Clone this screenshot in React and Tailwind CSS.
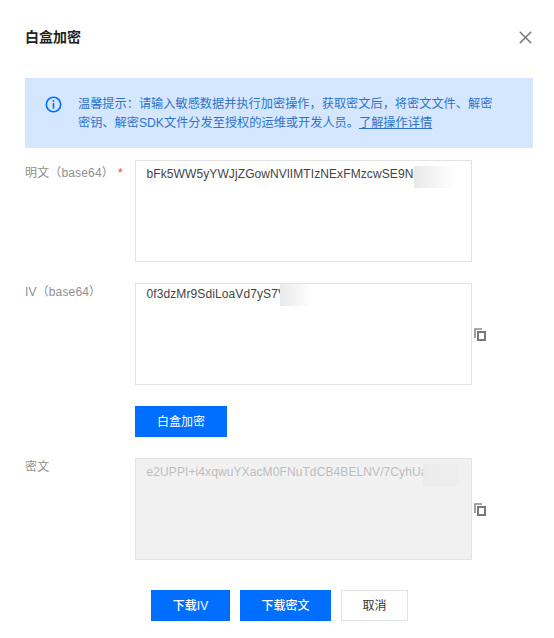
import React from 'react';
import { X } from 'lucide-react';

const tipLine1 = '温馨提示\uFF1A请输入敏感数据并执行加密操作\uFF0C获取密文后\uFF0C将密文文件\u3001解密';
const tipLine2 = '密钥\u3001解密SDK文件分发至授权的运维或开发人员\u3002';

const CopyIcon = () => (
  <svg width="12" height="13" viewBox="0 0 12 13" className="shrink-0" fill="none">
    <path d="M1 10V1h7" stroke="#8a8a8a" strokeWidth="1.6" />
    <rect x="4" y="4" width="7" height="8" stroke="#777777" strokeWidth="2" />
  </svg>
);

const Smudge = ({ className }) => (
  <span className={`absolute h-[22px] bg-gradient-to-r ${className}`} />
);

const Field = ({ label, required, value, disabled, copy, smudge, labelClass = 'pt-[4px]', valueClass = 'mt-[2px]', className = '' }) => (
  <div className={`flex items-start ${className}`}>
    <div className={`w-[110px] shrink-0 text-[12px] leading-[18px] tracking-[0.15px] text-[#8f8f8f] ${labelClass}`}>
      {label}
      {required && <span className="ml-[4px] text-[#e54545]">*</span>}
    </div>
    <div
      className={`relative h-[102px] w-[337px] shrink-0 border-[1.5px] border-[#e3e3e3] px-[10.5px] py-[1px] text-[12px] leading-[20px] tracking-[0.1px] ${
        disabled ? 'bg-[#f1f1f1] text-[#bdbdbd]' : 'bg-white text-[#444444]'
      }`}
    >
      <div className={valueClass}>{value}</div>
      {smudge}
    </div>
    {copy && (
      <div className="ml-[2px] flex h-[102px] items-center pt-[1px]">
        <CopyIcon />
      </div>
    )}
  </div>
);

export default function App() {
  return (
    <div
      className="h-[638px] w-[554px] overflow-hidden bg-white pl-[25px] pr-[21px] text-[12px]"
      style={{ fontFamily: '"Liberation Sans", "Noto Sans CJK SC", sans-serif' }}
    >
      <div className="flex h-[78px] items-start justify-between pt-[28px]">
        <h2 className="text-[14px] font-bold leading-[18px] text-[#222222]">白盒加密</h2>
        <X size={21} strokeWidth={1.8} className="-mr-[3px] -mt-[1px] text-[#7a7a7a]" />
      </div>

      <div className="flex h-[70px] w-[508px] items-start bg-[#d5e7ff] pl-[20px] pt-[17px]">
        <svg width="17" height="17" viewBox="0 0 17 17" className="mt-[1px] shrink-0" fill="none">
          <circle cx="8.5" cy="8.5" r="7.2" stroke="#006eff" strokeWidth="1.6" />
          <rect x="7.7" y="4" width="1.6" height="1.8" fill="#006eff" />
          <rect x="7.7" y="7" width="1.6" height="5.6" fill="#006eff" />
        </svg>
        <p className="ml-[16px] w-[425px] whitespace-nowrap text-[12.2px] leading-[19px] text-[#2f73c9]">
          {tipLine1}
          <br />
          {tipLine2}
          <span className="underline">了解操作详情</span>
        </p>
      </div>

      <Field
        className="mt-[12px]"
        label={'明文\uFF08base64\uFF09'}
        required
        value="bFk5WW5yYWJjZGowNVlIMTIzNExFMzcwSE9N"
        smudge={<Smudge className="left-[278px] top-[5px] w-[41px] from-[#e9e9e9] to-white" />}
      />
      <Field
        className="mt-[21px]"
        label={'IV\uFF08base64\uFF09'}
        labelClass="pt-0"
        valueClass="-mt-[1px]"
        copy
        value="0f3dzMr9SdiLoaVd7yS7V"
        smudge={<Smudge className="left-[144px] top-0 w-[32px] from-[#e9e9e9] to-white" />}
      />

      <button className="ml-[110px] mt-[21px] block h-[31px] w-[92px] bg-[#006eff] text-center text-[12px] text-white">
        白盒加密
      </button>

      <Field
        className="mt-[21px]"
        label="密文"
        labelClass="pt-0"
        disabled
        copy
        value="e2UPPI+i4xqwuYXacM0FNuTdCB4BELNV/7CyhUa"
        smudge={<Smudge className="left-[287px] top-[5px] w-[37px] from-[#ebebeb] to-[#eeeeee]" />}
      />

      <div className="ml-[126px] mt-[30px] flex gap-[10px]">
        <button className="h-[31px] w-[79px] bg-[#006eff] text-center text-[12px] font-medium text-white">下载IV</button>
        <button className="h-[31px] w-[91px] bg-[#006eff] text-center text-[12px] font-medium text-white">下载密文</button>
        <button className="h-[31px] w-[67px] border-[1.5px] border-[#e3e3e3] bg-white text-center text-[12px] text-[#333333]">取消</button>
      </div>
    </div>
  );
}
